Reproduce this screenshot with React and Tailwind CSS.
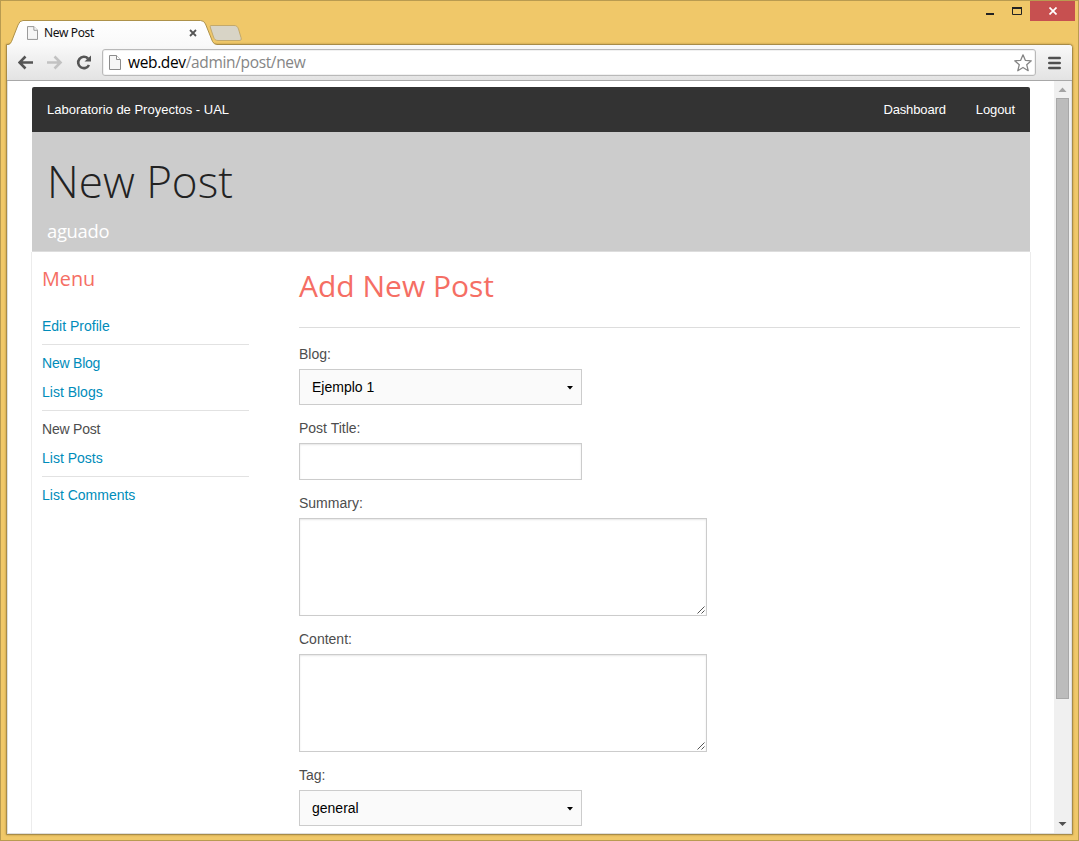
import React from "react";

function PageIcon({ className }) {
  return (
    <svg className={className} viewBox="0 0 12 15" fill="none">
      <path d="M.5.5H7.5L11.5 4.5V14.5H.5Z" fill="#f6f6f6" stroke="#8c8c8c" />
      <path d="M7.5.5V4.5H11.5" fill="#fff" stroke="#8c8c8c" />
    </svg>
  );
}

function TitleBar() {
  return (
    <div className="relative flex h-[43px] shrink-0 items-start justify-between">
      <svg className="absolute top-[19px] left-[5px] z-10" width="245" height="26" viewBox="0 0 245 26" fill="none">
        <defs>
          <linearGradient id="tab" x1="0" y1="0" x2="0" y2="1">
            <stop offset="0" stopColor="#fff" />
            <stop offset="1" stopColor="#f9f9f9" />
          </linearGradient>
        </defs>
        <path d="M205 5.5H228C230.5 5.5 231.500 6.500 232.500 9L235 17.500C235.700 20 235 20.500 233 20.500H212C209.500 20.500 208.500 19.500 207.500 17L204.500 8C204 6.200 204 5.500 205 5.500Z" fill="#d8d4c6" stroke="#c3a96b" />
        <path d="M2 26V25Q4.500 24.500 5.500 22L12 5Q13.500.5 17 .5H194.500Q198 .5 199.500 4L206.500 21.500Q208 24.500 211 24.500V26Z" fill="url(#tab)" />
        <path d="M2 24.500Q4.500 24 5.500 21.500L12 5Q13.500.5 17 .5H194.500Q198 .5 199.500 4L206.500 21.500Q208 24.500 211 24.500" stroke="#ae924b" />
      </svg>
      <div className="relative z-20 mt-5 flex h-[24px] items-center pl-[26px]">
        <PageIcon className="h-[14px] w-[11px]" />
        <span className="ml-[6px] w-[145px] font-['Noto_Sans',sans-serif] text-[12px] leading-4 tracking-[-0.35px] text-[#111]">New Post</span>
        <svg width="8" height="8" viewBox="0 0 8 8" stroke="#555" strokeWidth="1.8">
          <path d="M1 1L7 7M7 1L1 7" />
        </svg>
      </div>
      <div className="flex h-5 items-center pr-[3px]">
        <svg width="44" height="20" viewBox="0 0 44 20">
          <path d="M0 12H8V14H0Z" fill="#222" />
          <path d="M26.500 7.500H35.500V13.500H26.500Z" fill="none" stroke="#222" />
          <path d="M26 6H36V8H26Z" fill="#222" />
        </svg>
        <div className="flex h-5 w-[45px] items-center justify-center bg-[#c75050]">
          <svg width="8" height="8" viewBox="0 0 8 8" stroke="#fff" strokeWidth="1.700">
            <path d="M.5.5L7.500 7.500M7.500.5L.5 7.500" />
          </svg>
        </div>
      </div>
    </div>
  );
}

function Toolbar() {
  return (
    <div className="flex h-9 shrink-0 items-center border-b border-[#a8a8a8] bg-linear-to-b from-[#f9f9f9] to-[#e3e3e3]">
      <svg className="ml-[11px]" width="75" height="20" viewBox="0 0 75 20" fill="none">
        <path d="M15 9.500H2M7.500 3.500L1.500 9.500L7.500 15.500" stroke="#555" strokeWidth="2.600" />
        <path d="M29 9.500H42M36.500 3.500L42.500 9.500L36.500 15.500" stroke="#c2c2c2" strokeWidth="2.600" />
        <path d="M71 12A5.700 5.700 0 1 1 70 5.500" stroke="#555" strokeWidth="2.600" />
        <path d="M73 2.500V8.500H66.500Z" fill="#555" />
      </svg>
      <div className="ml-[9px] flex h-[27px] w-[934px] items-center rounded-[3px] border border-[#b9b9b9] bg-white pr-[3px] pl-[6px] shadow-[inset_0_0_0_1px_#f1f1f1]">
        <PageIcon className="h-[15px] w-3" />
        <span className="-mt-0.5 ml-[7px] grow font-['Open_Sans',sans-serif] text-[15.5px] leading-6 tracking-[-0.35px] text-[#858585]">
          <span className="text-black">web.dev</span>/admin/post/new
        </span>
        <svg width="18" height="18" viewBox="0 0 18 18" fill="none" stroke="#858585" strokeWidth="1.300" strokeLinejoin="round">
          <path d="M9 .8L11.300 6.300L17.300 6.800L12.700 10.700L14.200 16.700L9 13.500L3.800 16.700L5.300 10.700L.7 6.800L6.700 6.300Z" />
        </svg>
      </div>
      <svg className="ml-3" width="13" height="14" viewBox="0 0 13 14" stroke="#505050" strokeWidth="2.600" strokeLinecap="round">
        <path d="M1.300 2H11.700M1.300 7H11.700M1.300 12H11.700" />
      </svg>
    </div>
  );
}

function Scrollbar() {
  return (
    <div className="flex w-[17px] shrink-0 flex-col items-center justify-between bg-[#f0f0f0]">
      <div className="flex flex-col items-center">
        <svg width="17" height="17" viewBox="0 0 17 17" fill="#a3a3a3">
          <path d="M8.500 6.500L12.500 11H4.500Z" />
        </svg>
        <div className="h-[601px] w-[13px] border border-[#a8a8a8] bg-[#bcbcbc]" />
      </div>
      <svg width="17" height="17" viewBox="0 0 17 17" fill="#505050">
        <path d="M4.500 6H12.500L8.500 10Z" />
      </svg>
    </div>
  );
}

const menuGroups = [["Edit Profile"], ["New Blog", "List Blogs"], ["New Post", "List Posts"], ["List Comments"]];

function SideMenu() {
  return (
    <nav className="w-[207px] shrink-0">
      <h2 className="pt-3 font-['Open_Sans',sans-serif] text-[19.8px] leading-[30px] font-normal text-[#f56e64]">Menu</h2>
      <ul className="mt-[18px] text-[14px] leading-[29px]">
        {menuGroups.map((group, i) => (
          <li key={i} className={i ? "mt-[3px] border-t border-[#e2e2e2] pt-1" : ""}>
            {group.map((item) => (
              <a
                key={item}
                className={`block ${item === "New Post" ? "text-[#4d4d4d]" : "text-[#008cba]"} ${item.startsWith("New") ? "tracking-[-0.22px]" : ""}`}
              >
                {item}
              </a>
            ))}
          </li>
        ))}
      </ul>
    </nav>
  );
}

function Label({ children }) {
  return <label className="block h-[21px] text-[14px] leading-[21px] text-[#4d4d4d]">{children}</label>;
}

function SelectBox({ label, value }) {
  return (
    <div>
      <Label>{label}</Label>
      <div className="mt-1 flex h-9 w-[283px] items-center justify-between border border-[#ccc] bg-[#fafafa] pr-2 pl-3 text-[14px] text-black">
        <span>{value}</span>
        <svg className="mt-px" width="6" height="4" viewBox="0 0 6 4">
          <path d="M0 0H6L3 3.500Z" />
        </svg>
      </div>
    </div>
  );
}

function TextArea({ label }) {
  return (
    <div>
      <Label>{label}</Label>
      <div className="mt-1 flex h-[98px] w-[408px] items-end justify-end border border-[#ccc] bg-white p-px shadow-[inset_0_1px_2px_rgba(0,0,0,0.1)]">
        <svg width="8" height="8" viewBox="0 0 8 8" stroke="#555" strokeWidth="1">
          <path d="M.5 7.500L7.500.5M4.500 7.500L7.500 4.500" />
        </svg>
      </div>
    </div>
  );
}

function PostForm() {
  return (
    <main className="w-[721px]">
      <h1 className="h-[76px] border-b border-[#ddd] pt-[14px] font-['Open_Sans',sans-serif] text-[30px] leading-10 font-normal text-[#f56e64]">Add New Post</h1>
      <form className="flex flex-col gap-[13px] pt-4">
        <SelectBox label="Blog:" value="Ejemplo 1" />
        <div>
          <Label>Post Title:</Label>
          <div className="mt-1 h-[37px] w-[283px] border border-[#ccc] bg-white shadow-[inset_0_1px_2px_rgba(0,0,0,0.1)]" />
        </div>
        <TextArea label="Summary:" />
        <TextArea label="Content:" />
        <SelectBox label="Tag:" value="general" />
      </form>
    </main>
  );
}

export default function App() {
  return (
    <div className="flex h-[841px] w-[1079px] flex-col overflow-hidden border border-[#b99b50] bg-[#f0c869] font-['Liberation_Sans',Arial,sans-serif]">
      <TitleBar />
      <div className="mx-[5px] flex h-[791px] shrink-0 flex-col overflow-hidden rounded-tr-[4px] border border-[#a78b48] bg-white shadow-[0_0_2px_rgba(120,90,20,0.6)]">
        <Toolbar />
        <div className="flex min-h-0 grow border-r border-b border-l border-[#dedede]">
          <div className="flex grow overflow-hidden pt-[6px] pl-[23px]">
            <div className="w-[1000px] shrink-0">
              <header className="mx-px flex h-[45px] items-center justify-between rounded-t-[2px] bg-[#333] px-[15px] text-[13px] text-white">
                <span>Laboratorio de Proyectos - UAL</span>
                <div className="flex gap-[30px]">
                  <span className="tracking-[-0.13px]">Dashboard</span>
                  <span className="tracking-[-0.1px]">Logout</span>
                </div>
              </header>
              <section className="mx-px h-[120px] border-b border-[#ddd] bg-[#ccc] px-[15px] pt-[19px] font-['Open_Sans',sans-serif] font-light">
                <h1 className="text-[44px] leading-[60px] text-[#222]">New Post</h1>
                <p className="mt-[5px] text-[18.4px] leading-[30px] font-normal tracking-[-0.3px] text-white">aguado</p>
              </section>
              <div className="flex h-[620px] gap-[50px] border-x border-[#ececec] pl-[10px]">
                <SideMenu />
                <PostForm />
              </div>
            </div>
          </div>
          <Scrollbar />
        </div>
      </div>
    </div>
  );
}
